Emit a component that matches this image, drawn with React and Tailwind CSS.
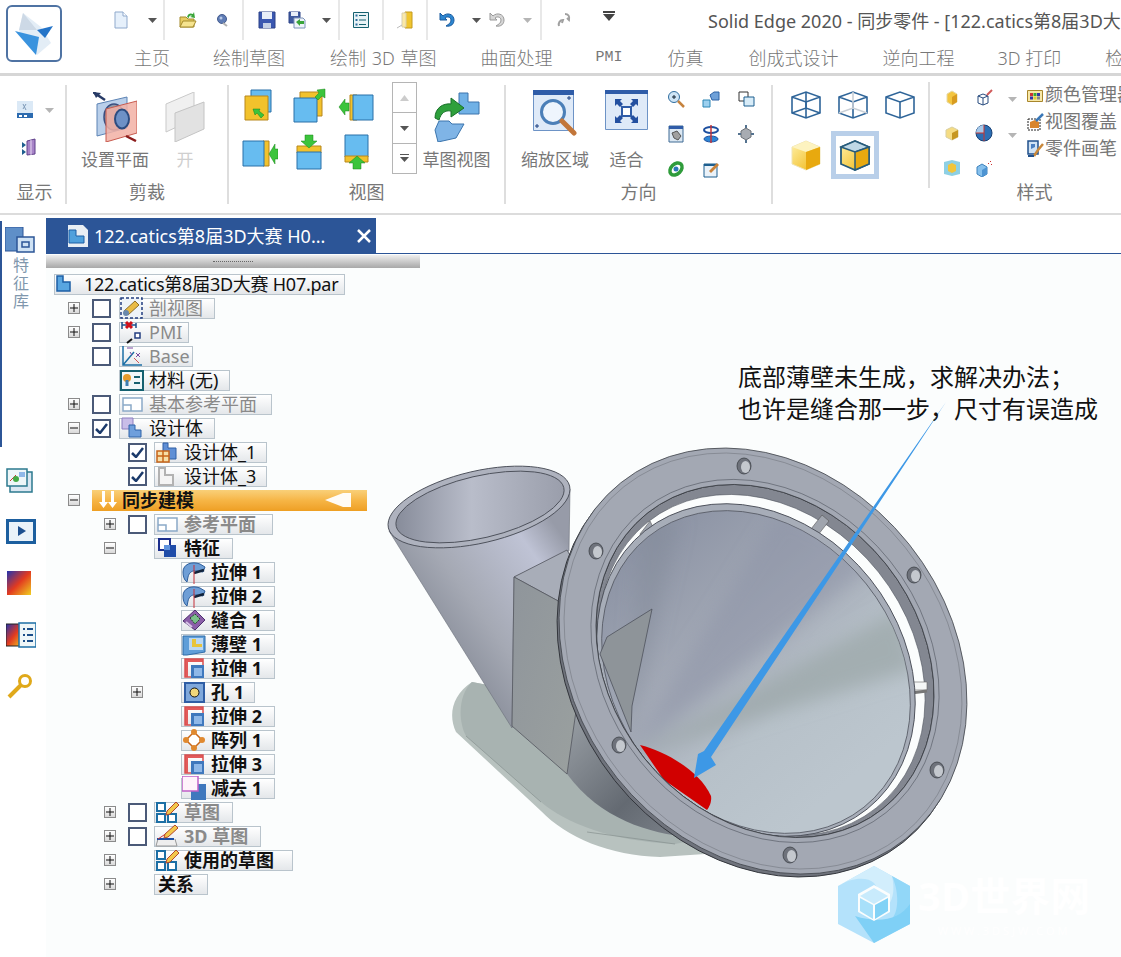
import clsx from "clsx";

const Svg = ({ w = 20, h = 20, className, children }) => (
  <svg width={w} height={h} viewBox={`0 0 ${w} ${h}`} className={clsx("shrink-0", className)}>
    {children}
  </svg>
);

const Caret = ({ light }) => (
  <Svg w={9} h={6}>
    <path d="M0 1h9L4.5 6z" fill={light ? "#b5b5b5" : "#555"} />
  </Svg>
);

const Sep = () => <div className="w-[2px] h-10 bg-[#e8e8e8]" />;

// quick access icons
const DocIcon = () => (
  <Svg w={14} h={18}>
    <path d="M1 1h8l4 4v12H1z" fill="#e6f0fb" stroke="#8fa9cc" />
    <path d="M9 1v4h4" fill="#fff" stroke="#8fa9cc" />
  </Svg>
);
const OpenIcon = () => (
  <Svg w={20} h={18}>
    <path d="M2 6h6l2 2h6v8H2z" fill="#e8cd62" stroke="#a58b2c" />
    <path d="M2 16l3-6h13l-3 6z" fill="#f6e48f" stroke="#a58b2c" />
    <path d="M9 6c1-4 4-4 6-3l1-2 1 6-5-1 2-1c-2-1-3 0-3 2z" fill="#3aa53a" />
  </Svg>
);
const SmallOrb = () => (
  <Svg w={12} h={14}>
    <circle cx="6" cy="6" r="4.5" fill="#5f7cb5" stroke="#445c8f" />
    <circle cx="5" cy="5" r="1.5" fill="#b8c9e6" />
    <path d="M7 10l4 3" stroke="#b2b2b2" strokeWidth="2" />
  </Svg>
);
const SaveIcon = () => (
  <Svg w={18} h={18}>
    <path d="M1 1h16v16H1z" fill="#3a57b0" stroke="#2c4288" />
    <path d="M4 1h10v7H4z" fill="#e8eef8" />
    <path d="M5 12h8v5H5z" fill="#c4d0e6" />
  </Svg>
);
const SaveAsIcon = () => (
  <Svg w={18} h={18}>
    <path d="M1 1h11v11H1z" fill="#3f5a9e" stroke="#2c4288" />
    <path d="M3 1h7v4H3z" fill="#e8eef8" />
    <path d="M6 7h9l2 2v8H6z" fill="#eef3fa" stroke="#7c93b8" />
    <path d="M8 11l4-3v2h4v3h-4v2z" fill="#3aa53a" />
  </Svg>
);
const ListIcon = () => (
  <Svg w={16} h={16}>
    <path d="M.5.5h15v15H.5z" fill="#e8f3f6" stroke="#15616f" />
    <path d="M6 3.5h7M6 8h7M6 12.5h7" stroke="#15616f" />
    <path d="M2.5 2.5h2v2h-2zM2.5 7h2v2h-2zM2.5 11.500h2v2h-2z" fill="#2c6e9e" />
  </Svg>
);
const DoorIcon = () => (
  <Svg w={16} h={18}>
    <path d="M8 1h7v16H8z" fill="#f0c52e" stroke="#c49a1e" />
    <path d="M5 2h4v14H5z" fill="#fbe9a6" stroke="#d8d0b0" />
    <path d="M0 17l5-3" stroke="#bbb" />
  </Svg>
);
const UndoIcon = ({ gray }) => (
  <Svg w={18} h={18}>
    <path
      d="M2 2v7h7L7 7c2-2 6-1 6 2 0 3-2 4-5 6 5 1 8-2 8-6 0-6-7-8-11-4z"
      fill={gray ? "#d6d6d6" : "#2c86d0"}
      stroke={gray ? "#999" : "#1a5a9e"}
    />
  </Svg>
);
const MiniArrows = () => (
  <Svg w={14} h={14}>
    <path d="M8 1c3 0 5 2 4 6l-2-2M2 13c-1-3 1-6 4-6l-1 3" fill="none" stroke="#a0a0a0" strokeWidth="2" />
  </Svg>
);

// ribbon icons
const DisplayIcon = () => (
  <Svg w={16} h={17}>
    <path d="M0 0h16v17H0z" fill="#dbe9f6" />
    <path d="M0 12h16v5H0z" fill="#2c6bb0" />
    <path d="M2 14h3v2H2zM7 14h3v2H7z" fill="#fff" />
    <path d="M6 3l3 6M9 3l-3 5" stroke="#7e9ab8" />
  </Svg>
);
const BooksIcon = () => (
  <Svg w={14} h={18}>
    <path d="M5 3l8-2v15l-8 1z" fill="#a884c8" stroke="#5f3f8a" />
    <path d="M9 2v15" stroke="#e8daf2" />
    <path d="M0 4l4 3-4 3zM0 11l4 3-4 3z" fill="#1f5f8f" />
  </Svg>
);
const PlaneIcon = () => (
  <Svg w={44} h={50}>
    <path d="M0 0l12 8" stroke="#273a66" strokeWidth="2.500" />
    <path d="M0 0l8 1-5 5z" fill="#273a66" />
    <path d="M4 12l30-7v31l-30 8z" fill="#b9cfea" stroke="#5c83b4" />
    <ellipse cx="21" cy="25" rx="10" ry="13" fill="#8f99a8" stroke="#3a4f80" strokeWidth="1.500" />
    <path d="M13 17l31-8v32l-31 9z" fill="#f2b0a5" fillOpacity=".85" stroke="#c75b4f" />
    <ellipse cx="29" cy="27" rx="7" ry="9.500" fill="#6e91c6" stroke="#2d4d80" strokeWidth="2" />
    <path d="M33 44l10 5" stroke="#8c1d1d" strokeWidth="2.500" />
  </Svg>
);
const PlaneGray = () => (
  <Svg w={40} h={50}>
    <path d="M1 12l28-12v27l-28 13z" fill="#f0f0f0" stroke="#c9c9c9" />
    <path d="M10 21l29-11v27l-29 13z" fill="#e2e2e2" stroke="#c4c4c4" />
  </Svg>
);
const Square3 = ({ variant }) => {
  const blue = "#67bcf0";
  const stroke = "#2b70a8";
  const yellow = "#f2c22c";
  const arrow = "#3cc43c";
  return (
    <Svg w={36} h={36}>
      {variant === 0 && (
        <g>
          <path d="M9 2h20v22H9z" fill={blue} stroke={stroke} />
          <path d="M3 8h23v24H3z" fill={yellow} stroke="#b8871d" />
          <path d="M11 21h7l-1 2 5 4-3 3-4-5-2 2z" fill={arrow} stroke="#188518" strokeWidth=".5" />
        </g>
      )}
      {variant === 1 && (
        <g>
          <path d="M8 4h22v24H8z" fill={yellow} stroke="#b8871d" />
          <path d="M2 10h23v24H2z" fill={blue} stroke={stroke} />
          <path d="M33 1v9l-3-2-4 4-3-3 4-4-2-3z" fill={arrow} stroke="#188518" strokeWidth=".5" />
        </g>
      )}
      {variant === 2 && (
        <g>
          <path d="M12 7h7v25h-7z" fill={yellow} stroke="#b8871d" />
          <path d="M15 7h20v25H15z" fill={blue} stroke={stroke} />
          <path d="M1 19l6-8v4h4v8H7v4z" fill={arrow} stroke="#188518" strokeWidth=".5" />
        </g>
      )}
      {variant === 3 && (
        <g>
          <path d="M21 7h6v25h-6z" fill={yellow} stroke="#b8871d" />
          <path d="M1 7h21v25H1z" fill={blue} stroke={stroke} />
          <path d="M36 19v6h-3v5l-6-10 6-10v5h3z" fill={arrow} stroke="#188518" strokeWidth=".5" />
        </g>
      )}
      {variant === 4 && (
        <g>
          <path d="M7 12h24v7H7z" fill={yellow} stroke="#b8871d" />
          <path d="M7 18h24v17H7z" fill={blue} stroke={stroke} />
          <path d="M19 14l-8-7h4V1h8v6h4z" fill={arrow} stroke="#188518" strokeWidth=".5" />
        </g>
      )}
      {variant === 5 && (
        <g>
          <path d="M7 1h23v22H7z" fill={blue} stroke={stroke} />
          <path d="M7 22h23v6H7z" fill={yellow} stroke="#b8871d" />
          <path d="M19 22l8 7h-4v6h-8v-6h-4z" fill={arrow} stroke="#188518" strokeWidth=".5" />
        </g>
      )}
    </Svg>
  );
};
const SketchViewIcon = () => (
  <Svg w={48} h={50}>
    <path d="M26 1h9v9h11v12H26z" fill="#70b1e6" stroke="#3c75ad" />
    <path d="M2 38l4-9h10l3 3h12l-8 14-18 4z" fill="#7fb4e6" stroke="#3c75ad" />
    <path d="M2 26c0-10 8-15 16-14V6l13 10-13 9v-6c-6-1-10 2-12 9z" fill="#2ea03c" stroke="#19702a" />
  </Svg>
);
const ZoomAreaIcon = () => (
  <Svg w={44} h={50}>
    <path d="M.5 .5h40v40H.5z" fill="#dfeaf8" stroke="#6d93c6" />
    <path d="M0 0h41v5H0z" fill="#2f5ca8" />
    <circle cx="20" cy="22" r="11.500" fill="#eef5fd" stroke="#4b7fb8" strokeWidth="3" />
    <path d="M29 31l12 12" stroke="#c2763a" strokeWidth="5" strokeLinecap="round" />
    <path d="M2 36h4M4 34v4M34 8h4M36 6v4" stroke="#1b3f80" />
  </Svg>
);
const FitIcon = () => (
  <Svg w={43} h={40}>
    <path d="M.5 .5h42v39H.5z" fill="#dfeaf8" stroke="#6d93c6" />
    <path d="M0 0h43v4H0z" fill="#2f5ca8" />
    <path d="M17 17h9v9h-9z" fill="#fff" stroke="#2f5ca8" strokeWidth="2" />
    <path d="M10 9l7 0-2 2 3 3-3 3-3-3-2 2zM33 9v7l-2-2-3 3-3-3 3-3-2-2zM10 33v-7l2 2 3-3 3 3-3 3 2 2zM33 33h-7l2-2-3-3 3-3 3 3 2-2z" fill="#2450a0" />
  </Svg>
);
const MiniIcon = ({ kind }) => (
  <Svg w={18} h={18}>
    {kind === "zoom" && (
      <g>
        <circle cx="7" cy="7" r="5.500" fill="#cfe5f6" stroke="#2f6d9f" />
        <path d="M5 7h4M7 5v4" stroke="#123" />
        <path d="M11 11l6 6" stroke="#c6833e" strokeWidth="2.500" />
      </g>
    )}
    {kind === "cubes" && (
      <g>
        <path d="M8 5l4-3h5v8h-7z" fill="#6ea0d8" stroke="#2d62a5" />
        <path d="M1 10h7v7H1z" fill="#9cd0ef" stroke="#2d86b5" />
      </g>
    )}
    {kind === "windows" && (
      <g>
        <path d="M2 2h9v9H2z" fill="#fff" stroke="#333" />
        <path d="M7 7h10v9H7z" fill="#d8ecf8" stroke="#1d5f8f" />
      </g>
    )}
    {kind === "hand" && (
      <g>
        <path d="M2 1h14v16H2z" fill="#dbe7f2" stroke="#3e6a94" />
        <path d="M2 1h14v3H2z" fill="#2f5ca8" />
        <path d="M5 8l5-2 4 5-3 4-4-2z" fill="#a0a0a0" stroke="#555" />
      </g>
    )}
    {kind === "spin" && (
      <g>
        <ellipse cx="9" cy="5" rx="7" ry="3" fill="none" stroke="#1d4f9f" strokeWidth="2" />
        <ellipse cx="9" cy="14" rx="7" ry="3" fill="#2d86d5" stroke="#1d4f9f" />
        <path d="M9 0v18" stroke="#c2343a" strokeWidth="1.500" />
      </g>
    )}
    {kind === "gear" && (
      <g>
        <path d="M9 3l5 3v6l-5 3-5-3V6z" fill="#a8acb2" stroke="#6b7076" />
        <path d="M9 0v3M9 15v3M1 9h3M14 9h3" stroke="#54728f" strokeWidth="2" />
      </g>
    )}
    {kind === "swirl" && (
      <g>
        <ellipse cx="9" cy="9" rx="5" ry="7" fill="none" stroke="#2f9c3b" strokeWidth="3.500" transform="rotate(45 9 9)" />
        <circle cx="9" cy="9" r="2.500" fill="#2c78b8" />
      </g>
    )}
    {kind === "edit" && (
      <g>
        <path d="M2 4h13v13H2z" fill="#eaf2f9" stroke="#1d5f8f" />
        <path d="M2 4h13v2H2z" fill="#1d5f8f" />
        <path d="M7 11l8-8 2 2-8 8z" fill="#c9823a" />
      </g>
    )}
    {kind === "goldCube" && (
      <g>
        <path d="M4 5l5-3 5 3v8l-5 3-5-3z" fill="#f3c53f" stroke="#e6d9a8" />
        <path d="M9 8v8l5-3V5z" fill="#d89b1f" />
      </g>
    )}
    {kind === "wirePen" && (
      <g>
        <path d="M3 7l5-2 5 2v7l-5 2-5-2zM8 9v7M3 7l5 2 5-2" fill="#fff" stroke="#274b7e" />
        <path d="M12 6l5-5" stroke="#d05a5a" strokeWidth="2" />
      </g>
    )}
    {kind === "goldShade" && (
      <g>
        <path d="M3 6l6-3 6 3v7l-6 3-6-3z" fill="#f5dc83" stroke="#d9cfa0" />
        <path d="M9 9v7l6-3V6z" fill="#c69722" />
      </g>
    )}
    {kind === "ball" && (
      <g>
        <circle cx="9" cy="9" r="8" fill="#2c6fb5" stroke="#173f73" />
        <path d="M1 9a8 8 0 0 1 8-8v8z" fill="#a7c9ea" />
        <path d="M9 1v16M1 9h8" stroke="#c8342f" />
      </g>
    )}
    {kind === "tealCube" && (
      <g>
        <path d="M1 3l8-2 8 2v12l-8 2-8-2z" fill="#8ed0e4" />
        <path d="M5 6l4-2 4 2v6l-4 2-4-2z" fill="#f2c53a" />
      </g>
    )}
    {kind === "blueSpray" && (
      <g>
        <path d="M2 8l5-3 5 3v7l-5 3-5-3z" fill="#86c0ec" stroke="#3d82bd" />
        <path d="M7 11v7l5-3V8z" fill="#4d94d2" />
        <path d="M13 5l1-1M15 3l1-1M16 6l1-1" stroke="#c33" />
      </g>
    )}
  </Svg>
);
const WireCube = ({ back }) => (
  <Svg w={32} h={30}>
    <path d="M2 7l14-5 14 5v16l-14 5-14-5zM2 7l14 5 14-5M16 12v16" fill="none" stroke="#2f6599" strokeWidth="1.600" />
    {back === "solid" && <path d="M16 2v16M2 23l14-5 14 5" fill="none" stroke="#2f6599" strokeWidth="1.600" />}
    {back === "faint" && <path d="M16 2v16M2 23l14-5 14 5" fill="none" stroke="#c9cfd6" strokeWidth="1.600" />}
  </Svg>
);
const GoldCube = ({ outline }) => (
  <Svg w={32} h={32}>
    <defs>
      <linearGradient id="goldFace" x1="0" y1="0" x2="1" y2="1">
        <stop offset="0" stopColor="#fff1a8" />
        <stop offset="1" stopColor="#efb40f" />
      </linearGradient>
    </defs>
    <path d="M2 8l14-6 14 6v17l-14 6-14-6z" fill="url(#goldFace)" stroke={outline ? "#275b7a" : "#f0e4b4"} strokeWidth={outline ? 1.800 : 1} />
    <path d="M2 8l14 5 14-5-14-6z" fill={outline ? "#bfd8e6" : "#fdf3c0"} stroke={outline ? "#275b7a" : "none"} strokeWidth="1.500" />
    <path d="M16 13v18l14-6V8z" fill="#e8a90f" stroke={outline ? "#275b7a" : "none"} strokeWidth="1.500" />
  </Svg>
);
const SwatchIcon = () => (
  <Svg w={16} h={14}>
    <path d="M.5 2.500h15v11H.5z" fill="#f8e8a8" stroke="#a8862c" />
    <path d="M3 5h3v3H3z" fill="#c33" />
    <path d="M6.500 5h3v3h-3z" fill="#3a3" />
    <path d="M10 5h3v3h-3zM3 8.500h3v3H3z" fill="#33a" />
    <path d="M6.500 8.500h3v3h-3z" fill="#dc3" />
    <path d="M10 8.500h3v3h-3z" fill="#888" />
  </Svg>
);
const OverrideIcon = () => (
  <Svg w={18} h={18}>
    <path d="M1 6h12v11H1z" fill="#fff" stroke="#222" strokeDasharray="2 1" />
    <path d="M3 9l5-2 4 2v6H3z" fill="#d9852c" />
    <path d="M9 8l7-7" stroke="#3a78b8" strokeWidth="2.500" />
  </Svg>
);
const BrushIcon = () => (
  <Svg w={18} h={18}>
    <path d="M1 1h10v13H1z" fill="#cfe2f4" stroke="#20508c" strokeWidth="1.500" />
    <path d="M4 9V4h4v3" fill="#4a7fc0" />
    <path d="M7 16l4-6 5-6" stroke="#c9883a" strokeWidth="2.500" fill="none" />
    <path d="M1 16h6" stroke="#20508c" strokeWidth="2" />
  </Svg>
);

const Group = ({ w, label, labelClass, children }) => (
  <div className={clsx("flex flex-col shrink-0", w)}>
    <div className="h-[95px]">{children}</div>
    <div className={clsx("h-6 text-center text-[18px] leading-6 text-[#777]", labelClass)}>{label}</div>
  </div>
);
const RibbonSep = ({ short }) => (
  <div className={clsx("w-[2px] bg-[#dedede] shrink-0", short ? "h-[106px] -mt-[3px]" : "h-[119px]")} />
);
const BigBtn = ({ label, faint, w, h = "h-[57px]", children }) => (
  <div className={clsx("flex flex-col items-center shrink-0", w)}>
    <div className={clsx("flex items-start justify-center", h)}>{children}</div>
    <div className={clsx("text-[17px] leading-[22px] whitespace-nowrap", faint ? "text-[#cfcfcf]" : "text-[#777]")}>{label}</div>
  </div>
);

// tree icons
const TreeIcon = ({ name }) => {
  const common = { w: 24, h: 24 };
  switch (name) {
    case "root":
      return (
        <Svg {...common}>
          <path d="M2 4h6v6h7v9H2z" fill="#58a5e0" stroke="#1d5fa5" strokeWidth="1.500" />
        </Svg>
      );
    case "section":
      return (
        <Svg {...common}>
          <path d="M1 2h21v20H1z" fill="#eef3f8" stroke="#233e80" strokeWidth="1.500" strokeDasharray="3 2" />
          <path d="M4 15L15 5l4 4-11 10z" fill="#e9bb45" stroke="#8d6f28" />
          <ellipse cx="6" cy="17" rx="3" ry="3" fill="#6a89ad" />
        </Svg>
      );
    case "pmi":
      return (
        <Svg {...common}>
          <path d="M2 2v7M2 5h5M16 3v5M11 5h5" stroke="#1c4f8a" strokeWidth="1.500" />
          <path d="M6 2l6 6M12 2l-6 6" stroke="#d0101a" strokeWidth="3" />
          <path d="M15 13h5v5h-5z" fill="#fff" stroke="#233e80" strokeWidth="1.500" />
          <path d="M12 19l-5 4" stroke="#111" strokeWidth="2" />
        </Svg>
      );
    case "base":
      return (
        <Svg {...common}>
          <path d="M3 2v19h19M3 21L14 8" stroke="#1c6fa5" strokeWidth="1.500" fill="none" />
          <path d="M7 4h6M16 9l4 4M20 9l-4 4M10 8l2 3" stroke="#7a4aa0" />
          <path d="M14 14l5 5" stroke="#d05555" />
        </Svg>
      );
    case "material":
      return (
        <Svg {...common}>
          <path d="M1 3h22v19H1z" fill="#eef6f8" stroke="#14606f" strokeWidth="2" />
          <circle cx="7" cy="10" r="4" fill="#e29a2c" />
          <path d="M7 12v6" stroke="#3d7fb0" strokeWidth="3" />
          <path d="M14 9h6M14 15h6" stroke="#14606f" strokeWidth="2" />
        </Svg>
      );
    case "plane":
      return (
        <Svg {...common}>
          <path d="M3 6h19v13H3z" fill="#fff" stroke="#8aa9c8" strokeWidth="1.500" />
          <path d="M3 13h8v6" fill="none" stroke="#8aa9c8" strokeWidth="1.500" />
        </Svg>
      );
    case "body":
      return (
        <Svg {...common}>
          <path d="M2 2h11v11H2z" fill="#c9bde8" stroke="#8c7fc0" />
          <path d="M9 9h6v5h6v7H9z" fill="#6f9fdc" stroke="#2f63a8" />
        </Svg>
      );
    case "body1":
      return (
        <Svg {...common}>
          <path d="M8 3h5v5h8v11H8z" fill="#5f8fd5" stroke="#2f5ea5" />
          <path d="M2 11h12v11H2z" fill="#f6dfa8" stroke="#c7661a" strokeWidth="1.500" />
          <path d="M8 11v11M2 16h12" stroke="#c7661a" strokeWidth="1.500" />
        </Svg>
      );
    case "body3":
      return (
        <Svg {...common}>
          <path d="M4 4h6v7h8v10H4z" fill="#f4f4f4" stroke="#b2b2b2" strokeWidth="2" />
        </Svg>
      );
    case "feature":
      return (
        <Svg {...common}>
          <path d="M4 3h11v11H4z" fill="#fff" stroke="#1c2f8c" strokeWidth="2" />
          <path d="M9 9h12v12H9z" fill="#1f4ca8" />
          <path d="M9 9h6v5H9z" fill="#5f93dd" />
        </Svg>
      );
    case "extrudeSync":
      return (
        <Svg {...common}>
          <path d="M1 12C1 4 10 1 18 4l5 3-2 5-6-1c-4-1-8 1-9 6l-1 5c-3-2-4-6-4-10z" fill="#6e9ed6" stroke="#2e5f9c" />
          <path d="M12 13l10-3" stroke="#12243c" strokeWidth="2.500" />
          <path d="M12 5v19" stroke="#c5303a" />
        </Svg>
      );
    case "stitch":
      return (
        <Svg {...common}>
          <path d="M1 13L13 2l10 10-10 10z" fill="#8b5fa8" stroke="#4c2f6e" />
          <path d="M8 10l5-4 5 5-5 5z" fill="#7ac08a" stroke="#24482a" strokeDasharray="2 1" />
          <path d="M4 14l6 5" stroke="#d8c4e6" strokeWidth="2" />
        </Svg>
      );
    case "thin":
      return (
        <Svg {...common}>
          <path d="M1 4h22v16L5 23H1z" fill="#5f9ed8" stroke="#2f6ca8" />
          <path d="M7 6h14v12H7z" fill="#bcd8f2" />
          <path d="M10 7v8h10v-3h-6V7z" fill="#e8c43a" />
        </Svg>
      );
    case "extrude":
      return (
        <Svg {...common}>
          <path d="M3 3h18v3H6v15H3z" fill="#e25a5a" />
          <path d="M3 3h18v18H3z" fill="none" stroke="#d95050" strokeWidth="1.500" />
          <path d="M9 9h13v13H9z" fill="#3f78bd" />
          <path d="M12 12h8v8h-8z" fill="#8fb8e8" />
        </Svg>
      );
    case "hole":
      return (
        <Svg {...common}>
          <path d="M3 3h19v19H3z" fill="#7fa8db" stroke="#2f5ea5" strokeWidth="2" />
          <circle cx="12.500" cy="12.500" r="4.500" fill="#f0d77a" stroke="#111" />
        </Svg>
      );
    case "pattern":
      return (
        <Svg {...common}>
          <path d="M12 4l8 8-8 8-8-8z" fill="#fff" stroke="#c7661a" strokeWidth="1.500" />
          <circle cx="12" cy="4" r="3" fill="#e0892f" />
          <circle cx="20" cy="12" r="3" fill="#e0892f" />
          <circle cx="12" cy="20" r="3" fill="#e0892f" />
          <circle cx="4" cy="12" r="3" fill="#e0892f" />
        </Svg>
      );
    case "subtract":
      return (
        <Svg {...common}>
          <path d="M9 8h15v16H9z" fill="#3f78bd" />
          <path d="M0 0h16v15H0z" fill="#fff3fb" stroke="#c060c8" strokeWidth="1.500" />
        </Svg>
      );
    case "sketch":
      return (
        <Svg {...common}>
          <path d="M2 3h8v8H2zM2 14h8v8H2zM13 14h8v8h-8z" fill="#fff" stroke="#1c6fa5" strokeWidth="2" />
          <path d="M12 11l9-9 3 3-9 9-4 1z" fill="#f2c84b" stroke="#b5462c" />
        </Svg>
      );
    case "sketch3d":
      return (
        <Svg {...common}>
          <path d="M3 15l-2 7h21l-2-7" fill="#eee" stroke="#999" />
          <path d="M2 15h17" stroke="#1c4fa5" strokeWidth="2" />
          <path d="M3 15l9-6" stroke="#c33" />
          <path d="M10 10l10-9 3 3-10 9-4 1z" fill="#f2c84b" stroke="#b5462c" />
        </Svg>
      );
    default:
      return null;
  }
};

const Expander = ({ open }) => (
  <div className="w-3 h-3 border border-[#8b8b8b] bg-gradient-to-b from-white to-[#d9d9d9] flex items-center justify-center shrink-0">
    <Svg w={8} h={8}>
      <path d={open ? "M0 4h8" : "M0 4h8M4 0v8"} stroke="#111" />
    </Svg>
  </div>
);
const Check = ({ on }) => (
  <div className="w-[19px] h-[19px] border-2 border-[#4b5a78] bg-white flex items-center justify-center shrink-0">
    {on && (
      <Svg w={13} h={11}>
        <path d="M1 6l4 4 7-9" fill="none" stroke="#1b3a6b" strokeWidth="2.500" />
      </Svg>
    )}
  </div>
);

const LEVELS = {
  root: { row: "pl-2", exp: "w-0", chk: "w-0" },
  a: { row: "pl-[22px]", exp: "w-6", chk: "w-[27px]" },
  b: { row: "pl-[58px]", exp: "w-6", chk: "w-[26px]" },
  c: { row: "pl-[85px]", exp: "w-[50px]", chk: "w-0" },
};

const Row = ({ level, exp, chk, icon, text, w, gray, bold, textClass }) => {
  const l = LEVELS[level];
  return (
    <div className={clsx("h-6 flex items-center", l.row)}>
      <div className={clsx("shrink-0", l.exp)}>{exp && <Expander open={exp === "open"} />}</div>
      <div className={clsx("shrink-0", l.chk)}>{chk && <Check on={chk === "on"} />}</div>
      <div
        className={clsx(
          "h-[21px] flex items-center border border-[#b9c4cc] bg-gradient-to-b from-white to-[#e4e7ea] whitespace-nowrap shrink-0",
          w
        )}
      >
        <div className={clsx("h-[21px] shrink-0 flex items-center justify-start", icon ? "w-[29px]" : "w-[3px]")}>
          {icon && <TreeIcon name={icon} />}
        </div>
        <span
          className={clsx(
            "text-[18px] leading-[21px]",
            gray ? "text-[#8a8a8a]" : "text-[#111]",
            bold && "font-bold",
            textClass
          )}
        >
          {text}
        </span>
      </div>
    </div>
  );
};

const TREE_TOP = [
  { level: "a", exp: "closed", chk: "off", icon: "section", text: "剖视图", w: "w-[96px]", gray: true },
  { level: "a", exp: "closed", chk: "off", icon: "pmi", text: "PMI", w: "w-[70px]", gray: true },
  { level: "a", chk: "off", icon: "base", text: "Base", w: "w-[74px]", gray: true },
  { level: "a", icon: "material", text: "材料 (无)", w: "w-[111px]" },
  { level: "a", exp: "closed", chk: "off", icon: "plane", text: "基本参考平面", w: "w-[153px]", gray: true },
  { level: "a", exp: "open", chk: "on", icon: "body", text: "设计体", w: "w-[96px]" },
  { level: "b", chk: "on", icon: "body1", text: "设计体_1", w: "w-[113px]" },
  { level: "b", chk: "on", icon: "body3", text: "设计体_3", w: "w-[113px]" },
];
const TREE_BOTTOM = [
  { level: "b", exp: "closed", chk: "off", icon: "plane", text: "参考平面", w: "w-[119px]", gray: true, bold: true },
  { level: "b", exp: "open", icon: "feature", text: "特征", w: "w-[79px]", bold: true },
  { level: "c", icon: "extrudeSync", text: "拉伸 1", w: "w-[94px]", bold: true },
  { level: "c", icon: "extrudeSync", text: "拉伸 2", w: "w-[94px]", bold: true },
  { level: "c", icon: "stitch", text: "缝合 1", w: "w-[94px]", bold: true },
  { level: "c", icon: "thin", text: "薄壁 1", w: "w-[94px]", bold: true },
  { level: "c", icon: "extrude", text: "拉伸 1", w: "w-[94px]", bold: true },
  { level: "c", exp: "closed", icon: "hole", text: "孔 1", w: "w-[74px]", bold: true },
  { level: "c", icon: "extrude", text: "拉伸 2", w: "w-[94px]", bold: true },
  { level: "c", icon: "pattern", text: "阵列 1", w: "w-[94px]", bold: true },
  { level: "c", icon: "extrude", text: "拉伸 3", w: "w-[94px]", bold: true },
  { level: "c", icon: "subtract", text: "减去 1", w: "w-[94px]", bold: true },
  { level: "b", exp: "closed", chk: "off", icon: "sketch", text: "草图", w: "w-[79px]", gray: true, bold: true },
  { level: "b", exp: "closed", chk: "off", icon: "sketch3d", text: "3D 草图", w: "w-[107px]", gray: true, bold: true },
  { level: "b", exp: "closed", icon: "sketch", text: "使用的草图", w: "w-[139px]", bold: true },
];

// ellipse outline as a path so rings can be cut with evenodd
const ell = (cx, cy, a, b, rot) => {
  const t = (rot * Math.PI) / 180;
  const dx = a * Math.cos(t);
  const dy = a * Math.sin(t);
  return `M${cx + dx} ${cy + dy}A${a} ${b} ${rot} 1 0 ${cx - dx} ${cy - dy}A${a} ${b} ${rot} 1 0 ${cx + dx} ${cy + dy}Z`;
};

const HOLES = [
  [744, 467],
  [914, 576],
  [937, 771],
  [790, 856],
  [619, 746],
  [596, 552],
];

const Model = () => (
  <svg
    width="741"
    height="557"
    viewBox="380 400 741 557"
    className="absolute left-[334px] top-[184px] pointer-events-none"
  >
    <defs>
      <linearGradient id="funnel" gradientUnits="userSpaceOnUse" x1="425" y1="640" x2="565" y2="540">
        <stop offset="0" stopColor="#858a96" />
        <stop offset=".35" stopColor="#a5a9b4" />
        <stop offset=".8" stopColor="#bfc3d5" />
        <stop offset="1" stopColor="#979ba8" />
      </linearGradient>
      <linearGradient id="funnelIn" x1="0" y1="0" x2="1" y2="0">
        <stop offset="0" stopColor="#878c9a" />
        <stop offset=".45" stopColor="#b9bdca" />
        <stop offset="1" stopColor="#9a9eab" />
      </linearGradient>
      <linearGradient id="cone" gradientUnits="userSpaceOnUse" x1="650" y1="540" x2="850" y2="780">
        <stop offset="0" stopColor="#8d94a5" />
        <stop offset=".45" stopColor="#a6acb8" />
        <stop offset=".7" stopColor="#b7c1c9" />
        <stop offset="1" stopColor="#bcc6ce" />
      </linearGradient>
      <linearGradient id="blockFace" x1="0" y1="0" x2="1" y2="1">
        <stop offset="0" stopColor="#8f959b" />
        <stop offset="1" stopColor="#9aa09f" />
      </linearGradient>
      <linearGradient id="dark" x1="0" y1="0" x2="1" y2="1">
        <stop offset="0" stopColor="#9aa0a6" />
        <stop offset=".6" stopColor="#646a72" />
        <stop offset="1" stopColor="#7d838b" />
      </linearGradient>
      <filter id="soft" x="-20%" y="-20%" width="140%" height="140%">
        <feGaussianBlur stdDeviation="9" />
      </filter>
      <clipPath id="coneClip">
        <path d={ell(756, 673, 173, 141, 51.4)} />
      </clipPath>
    </defs>

    {/* base plate */}
    <path d="M472 683C452 696 448 716 456 733L541 812C566 838 610 857 660 858L705 855L760 830L560 700Z" fill="#b8c2bf" />
    <path d="M472 683C458 696 458 722 466 737L541 803C566 824 610 842 675 845L750 830L560 700Z" fill="#a8b3b1" />
    <path d="M466 737L541 803M587 833L675 845" stroke="#87918f" strokeWidth=".7" fill="none" />

    {/* funnel lower dark part */}
    <path d="M567 775L575 713L660 800L690 838C650 835 600 820 567 775Z" fill="url(#dark)" />

    {/* funnel body */}
    <path d="M389 532L512 729L514 578L569 552L570 490Z" fill="url(#funnel)" stroke="#6a6e78" strokeWidth=".6" />

    {/* rib */}
    <path d="M514 578L567 551L572 560L560 603Z" fill="#a8adb8" stroke="#53565e" strokeWidth=".8" />
    <path d="M514 578L560 603L576 712L567 775L512 727Z" fill="url(#blockFace)" stroke="#53565e" strokeWidth=".8" />

    {/* funnel mouth */}
    <path d={ell(479, 508, 93, 36, -13)} fill="#aeb2be" stroke="#4e525c" strokeWidth="1" />
    <path d={ell(480, 508, 86, 31, -13)} fill="url(#funnelIn)" stroke="#4e525c" strokeWidth="1" />

    {/* flange inner wall and open gap */}
    <path d={ell(765, 662, 189, 155, 51.4)} fill="#838791" />
    <path d={ell(762, 666, 183, 149, 51.4)} fill="#fbfdfd" stroke="#4e525c" strokeWidth=".6" />
    <path d="M811 530L822 516L829 522L818 536Z" fill="#a0a5ae" stroke="#555" strokeWidth=".6" />
    <path d="M911 683H927V691H911Z" fill="#f5f7f7" stroke="#666" strokeWidth=".6" />
    <path d="M911 694L927 692" stroke="#777" strokeWidth="3" />
    <path d="M640 535L650 522L654 530L645 545Z" fill="#a0a5ae" stroke="#555" strokeWidth=".6" />

    {/* cone */}
    <path d={ell(756, 671, 178, 146, 51.4)} fill="#a7adb8" stroke="#4e525c" />
    <path d={ell(756, 673, 173, 141, 51.4)} fill="url(#cone)" stroke="#4e525c" strokeWidth=".8" />
    <g clipPath="url(#coneClip)">
      <g filter="url(#soft)">
        <path d="M625 760L780 510L880 560Z" fill="#8a91a3" opacity=".45" />
        <path d="M625 760L900 610L915 670Z" fill="#9aa5a6" opacity=".7" />
        <path d="M625 760L680 520L640 520Z" fill="#7f8695" opacity=".4" />
      </g>
    </g>
    <path d="M652 610L607 638L600 655L631 733L632 707Z" fill="#8e9499" stroke="#4e525c" strokeWidth=".8" />
    <path d="M640 746C665 752 700 772 711 797C712 803 709 808 707 811L664 781Z" fill="#d10000" />

    {/* flange */}
    <path d={ell(761, 665, 228, 187, 51.4) + ell(765, 662, 189, 155, 51.4)} fillRule="evenodd" fill="#6f737c" stroke="#33363c" />
    <path d={ell(763, 662, 228, 187, 51.4) + ell(765, 662, 189, 155, 51.4)} fillRule="evenodd" fill="#a3a8b3" stroke="#3e4148" strokeWidth=".8" />
    <path d={ell(763, 662, 223, 182, 51.4)} fill="none" stroke="#6a6e77" strokeWidth=".5" />
    <path d={ell(765, 662, 194, 160, 51.4)} fill="none" stroke="#4e525c" strokeWidth=".6" />
    {HOLES.map(([x, y]) => (
      <g key={x}>
        <ellipse cx={x} cy={y} rx="7" ry="8" fill="#6e727b" stroke="#3e4148" strokeWidth=".8" />
        <ellipse cx={x + 1.500} cy={y + 1} rx="4.500" ry="6" fill="#c4c8ce" />
      </g>
    ))}

    {/* arrow */}
    <path d="M946 403L711 758L716 766L694 779L698 755L704 752Z" fill="#3d98e6" />

    {/* watermark */}
    <path d="M874 867L910 887V925L874 944L838 925V887Z" fill="#b4e2fb" />
    <path d="M874 867L892 877C895 890 893 900 889 905L874 884C868 878 852 878 838 887Z" fill="#d2eefc" />
    <path d="M892 877L910 887V925L892 920C900 910 898 890 892 877Z" fill="#92d7f8" />
    <path d="M855 917L874 944L910 925V905C900 920 880 925 855 917Z" fill="#7fd0f6" />
    <path d="M874 886L890 895V913L874 922L858 913V895Z" fill="#fbfdfd" />
    <path d="M874 889L888 897L874 905L860 897Z" fill="#c9ebfc" />
    <path d="M860 899L873 906V920L860 912Z" fill="#a8e0fa" />
    <path d="M875 906L888 899V912L875 920Z" fill="#82d2f6" />
  </svg>
);

export default function App() {
  return (
    <div className="w-[1121px] h-[957px] overflow-hidden bg-white flex flex-col [font-family:'Noto_Sans','Noto_Sans_CJK_SC',sans-serif]">
      {/* title + tabs */}
      <div className="h-[76px] shrink-0 border-b-[3px] border-[#d6d6d6] flex">
        <div className="w-[56px] h-[57px] ml-[6px] mt-[5px] rounded-md border-2 border-[#4f73a3] flex items-center justify-center shrink-0">
          <Svg w={38} h={42}>
            <path d="M8 0L26 14 36 30 22 42 4 18z" fill="#e3edf6" />
            <path d="M0 18l24 6-3 18z" fill="#3a93de" />
            <path d="M22 17l16-4-8 12z" fill="#2474c8" />
            <path d="M8 0l14 17-18 0z" fill="#cdd9e6" />
          </Svg>
        </div>
        <div className="flex-1 min-w-0 flex flex-col">
          <div className="h-10 flex items-start overflow-hidden">
            <div className="flex items-center h-10 pl-[52px] shrink-0">
              <DocIcon />
              <div className="w-[20px]" />
              <Caret />
              <div className="w-[6px]" />
              <Sep />
              <div className="w-[13px]" />
              <OpenIcon />
              <div className="w-[18px]" />
              <SmallOrb />
              <div className="w-[14px]" />
              <Sep />
              <div className="w-[14px]" />
              <SaveIcon />
              <div className="w-[12px]" />
              <SaveAsIcon />
              <div className="w-[16px]" />
              <Caret />
              <div className="w-[7px]" />
              <Sep />
              <div className="w-[13px]" />
              <ListIcon />
              <div className="w-[13px]" />
              <Sep />
              <div className="w-[13px]" />
              <DoorIcon />
              <div className="w-[13px]" />
              <Sep />
              <div className="w-[10px]" />
              <UndoIcon />
              <div className="w-[16px]" />
              <Caret />
              <div className="w-[7px]" />
              <UndoIcon gray />
              <div className="w-[17px]" />
              <Caret light />
              <div className="w-[8px]" />
              <Sep />
              <div className="w-[15px]" />
              <MiniArrows />
              <div className="w-[32px]" />
              <div className="-mt-[8px] flex flex-col gap-[1px]">
                <div className="w-3 h-[2px] bg-[#444]" />
                <Svg w={12} h={7}>
                  <path d="M0 0h12L6 7z" fill="#444" />
                </Svg>
              </div>
              <div className="w-[93px]" />
              <div className="mt-[2px] text-[18px] text-[#555] whitespace-nowrap">
                Solid Edge 2020 - 同步零件 - [122.catics第8届3D大
              </div>
            </div>
          </div>
          <div className="flex items-center h-[33px] pt-1 pl-[72px] text-[18px] text-[#777] whitespace-nowrap font-light">
            <span>主页</span>
            <span className="ml-[43px]">绘制草图</span>
            <span className="ml-[45px] [word-spacing:1px]">绘制 3D 草图</span>
            <span className="ml-[44px]">曲面处理</span>
            <span className="ml-[43px] [font-family:'Liberation_Mono',monospace] text-[15px] font-normal">PMI</span>
            <span className="ml-[45px]">仿真</span>
            <span className="ml-[45px]">创成式设计</span>
            <span className="ml-[44px]">逆向工程</span>
            <span className="ml-[43px]">3D 打印</span>
            <span className="ml-[44px]">检</span>
          </div>
        </div>
      </div>

      {/* ribbon */}
      <div className="h-[139px] shrink-0 border-b-2 border-[#dcdcdc] pt-[9px] flex overflow-hidden">
        <Group w="w-[65px]" label="显示" labelClass="pl-1">
          <div className="flex flex-col pt-4 pl-[17px] gap-5">
            <div className="flex items-center gap-[12px]">
              <DisplayIcon />
              <Caret light />
            </div>
            <div className="pl-[5px]">
              <BooksIcon />
            </div>
          </div>
        </Group>
        <RibbonSep />
        <Group w="w-[160px]" label="剪裁">
          <div className="flex pt-[7px] pl-[13px]">
            <BigBtn label="设置平面" w="w-[70px]">
              <PlaneIcon />
            </BigBtn>
            <BigBtn label="开" faint w="w-[70px]">
              <PlaneGray />
            </BigBtn>
          </div>
        </Group>
        <RibbonSep />
        <Group w="w-[275px]" label="视图">
          <div className="flex pl-[13px]">
            <div className="flex flex-col pt-[3px] gap-[10px] shrink-0 w-[150px]">
              <div className="flex">
                <Square3 variant={0} />
                <div className="ml-[14px]">
                  <Square3 variant={1} />
                </div>
                <div className="ml-[10px]">
                  <Square3 variant={2} />
                </div>
              </div>
              <div className="flex gap-[12px]">
                <Square3 variant={3} />
                <Square3 variant={4} />
                <Square3 variant={5} />
              </div>
            </div>
            <div className="w-[25px] h-[92px] -mt-[3px] border border-[#b5b5b5] flex flex-col shrink-0">
              <div className="flex-1 flex items-center justify-center border-b border-[#b5b5b5]">
                <Svg w={9} h={6}>
                  <path d="M0 6h9L4.500 0z" fill="#ccc" />
                </Svg>
              </div>
              <div className="flex-1 flex items-center justify-center border-b border-[#b5b5b5]">
                <Caret />
              </div>
              <div className="flex-1 flex flex-col gap-[1px] items-center justify-center">
                <div className="w-[9px] h-[1px] bg-[#555]" />
                <Caret />
              </div>
            </div>
            <div className="pt-[7px] pl-[4px]">
              <BigBtn label="草图视图" w="w-[71px]">
                <SketchViewIcon />
              </BigBtn>
            </div>
          </div>
        </Group>
        <RibbonSep />
        <Group w="w-[265px]" label="方向">
          <div className="flex pl-[13px] pt-[5px]">
            <BigBtn label="缩放区域" w="w-[72px]" h="h-[59px]">
              <ZoomAreaIcon />
            </BigBtn>
            <div className="ml-[14px]">
              <BigBtn label="适合" w="w-[43px]" h="h-[59px]">
                <FitIcon />
              </BigBtn>
            </div>
            <div className="ml-[19px] grid grid-cols-[18px_18px_18px] gap-x-[17px] gap-y-[17px] h-fit">
              {["zoom", "cubes", "windows", "hand", "spin", "gear", "swirl", "edit"].map((k) => (
                <MiniIcon key={k} kind={k} />
              ))}
            </div>
          </div>
        </Group>
        <RibbonSep />
        <Group w="w-[155px]" label="">
          <div className="flex flex-col pt-[5px] pl-[17px] gap-[16px]">
            <div className="flex gap-[15px]">
              <WireCube back="solid" />
              <WireCube back="faint" />
              <WireCube />
            </div>
            <div className="flex items-center gap-[9px] -mt-[5px]">
              <GoldCube />
              <div className="w-[48px] h-[48px] border-[5px] border-[#b9cfe9] flex items-center justify-center">
                <GoldCube outline />
              </div>
            </div>
          </div>
        </Group>
        <RibbonSep short />
        <Group w="w-[195px]" label="样式" labelClass="pl-[14px]">
          <div className="flex pl-[13px] pt-[4px]">
            <div className="grid grid-cols-[18px_18px] gap-x-[14px] gap-y-[17px] h-fit shrink-0">
              {["goldCube", "wirePen", "goldShade", "ball", "tealCube", "blueSpray"].map((k) => (
                <MiniIcon key={k} kind={k} />
              ))}
            </div>
            <div className="flex flex-col gap-[30px] pt-[7px] pl-[15px] shrink-0">
              <Caret light />
              <Caret light />
            </div>
            <div className="flex flex-col -mt-[8px] pl-[10px] text-[18px] leading-[27px] text-[#777] whitespace-nowrap">
              <div className="flex items-center gap-[2px]">
                <SwatchIcon />
                颜色管理器
              </div>
              <div className="flex items-center">
                <OverrideIcon />
                视图覆盖
              </div>
              <div className="flex items-center">
                <BrushIcon />
                零件画笔
              </div>
            </div>
          </div>
        </Group>
      </div>

      {/* main */}
      <div className="flex-1 flex min-h-0 bg-[#fbfdfd]">
        <div className="w-[46px] shrink-0 bg-white relative flex flex-col">
          <div className="w-[2px] h-[226px] bg-[#2c5597] absolute left-0 top-[6px]" />
          <div className="pl-[5px] pt-3">
            <Svg w={30} h={26}>
              <path d="M0 0h18v24H0z" fill="#5f8fc8" stroke="#2c5597" />
              <path d="M12 10h17v15H12z" fill="#cfe2f4" stroke="#2c5597" strokeWidth="1.500" />
              <path d="M17 15h7v5h-7z" fill="none" stroke="#2c5597" strokeWidth="1.500" />
            </Svg>
          </div>
          <div className="[writing-mode:vertical-rl] w-5 h-[56px] whitespace-nowrap ml-[10px] text-[16px] tracking-[2px] text-[#8097ad] pt-1 leading-[20px]">特征库</div>
          <div className="flex flex-col gap-[26px] pl-[6px] mt-[159px]">
            <Svg w={27} h={25}>
              <path d="M4 4h22v20H4z" fill="#dbe7f2" stroke="#2c7a8f" strokeWidth="1.500" />
              <path d="M1 1h20v17H1z" fill="#eef6f8" stroke="#2c7a8f" strokeWidth="1.500" />
              <path d="M4 13l6-6" stroke="#c33" />
              <circle cx="10" cy="11" r="3" fill="#4a4" />
              <path d="M13 4h6v5h-6z" fill="#8fb8e8" />
            </Svg>
            <Svg w={30} h={25}>
              <path d="M0 0h30v25H0z" fill="#1d5f9f" />
              <path d="M3 3h24v19H3z" fill="#eaf2f9" />
              <path d="M12 7l8 5-8 5z" fill="#1d4f8f" />
            </Svg>
            <Svg w={26} h={26}>
              <defs>
                <linearGradient id="heat" x1="0" y1="0" x2="1" y2="1">
                  <stop offset="0" stopColor="#2233b0" />
                  <stop offset=".5" stopColor="#e23a20" />
                  <stop offset="1" stopColor="#f0d020" />
                </linearGradient>
              </defs>
              <path d="M1 1h24v24H1z" fill="url(#heat)" />
            </Svg>
            <Svg w={30} h={26}>
              <path d="M0 2h17v22H0z" fill="url(#heat)" stroke="#222" />
              <path d="M13 1h17v24H13z" fill="#eef6f8" stroke="#1c6fa5" strokeWidth="1.500" />
              <path d="M17 7h2M21 7h6M17 13h2M21 13h6M17 19h2M21 19h6" stroke="#1c4f8a" strokeWidth="2" />
            </Svg>
            <Svg w={28} h={26}>
              <circle cx="19" cy="7" r="5.500" fill="none" stroke="#e0a91a" strokeWidth="3" />
              <path d="M15 11L3 23" stroke="#e0a91a" strokeWidth="4" />
            </Svg>
          </div>
        </div>
        <div className="flex-1 min-w-0 relative flex flex-col">
          <div className="h-[39px] shrink-0 pt-[3px] border-b border-[#2c5597] bg-white">
            <div className="w-[330px] h-[36px] bg-[#2c5597] flex items-center pl-5 text-white text-[18px] whitespace-nowrap">
              <Svg w={23} h={24}>
                <path d="M2 1h15l5 5v17H2z" fill="#e8eef4" />
                <path d="M3 6h7v6h8v7H3z" fill="#4fa0dc" stroke="#1d5fa5" />
              </Svg>
              <span className="ml-[5px] flex-1">122.catics第8届3D大赛 H0...</span>
              <Svg w={14} h={14} className="mr-[5px]">
                <path d="M1 1l12 12M13 1L1 13" stroke="#fff" strokeWidth="2.500" />
              </Svg>
            </div>
          </div>
          <div className="w-[374px] h-[13px] mt-[1px] shrink-0 bg-gradient-to-b from-[#efefef] to-[#a8a8a8] flex items-center justify-center">
            <div className="w-10 border-t border-dotted border-[#666]" />
          </div>

          {/* feature tree */}
          <div className="pt-[4px] flex flex-col">
            <Row level="root" icon="root" text="122.catics第8届3D大赛 H07.par" w="w-[291px]" textClass="tracking-[-0.25px]" />
            {TREE_TOP.map((r) => (
              <Row key={r.text} {...r} />
            ))}
            <div className="h-6 flex items-center pl-[22px]">
              <div className="w-6 shrink-0">
                <Expander open />
              </div>
              <div className="w-[275px] h-[21px] bg-gradient-to-b from-[#f9d078] via-[#f6b545] to-[#ee9f22] flex items-center">
                <Svg w={30} h={18}>
                  <path d="M10 0h3v11h3l-4.500 6L7 11h3zM19 0h3v11h3l-4.500 6-4.500-6h3z" fill="#fff" />
                </Svg>
                <span className="text-[18px] font-bold text-[#111]">同步建模</span>
                <Svg w={28} h={16} className="ml-[131px]">
                  <path d="M0 8l18-7h8v14h-8z" fill="#fff" opacity=".95" />
                </Svg>
              </div>
            </div>
            {TREE_BOTTOM.map((r, i) => (
              <Row key={i} {...r} />
            ))}
            <Row level="b" exp="closed" text="关系" w="w-[54px]" bold />
          </div>

          <Model />

          <div className="absolute left-[692px] top-[146px] text-[24px] leading-8 text-[#111] whitespace-nowrap">
            <div>底部薄壁未生成，求解决办法；</div>
            <div>也许是缝合那一步，尺寸有误造成</div>
          </div>

          <div className="absolute left-[872px] top-[654px] flex flex-col items-center text-white">
            <div className="text-[40px] leading-[54px] font-bold whitespace-nowrap">3D世界网</div>
            <div className="text-[11px] leading-4 tracking-[3px] whitespace-nowrap">WWW.3DSJW.COM</div>
          </div>
        </div>
      </div>
    </div>
  );
}
